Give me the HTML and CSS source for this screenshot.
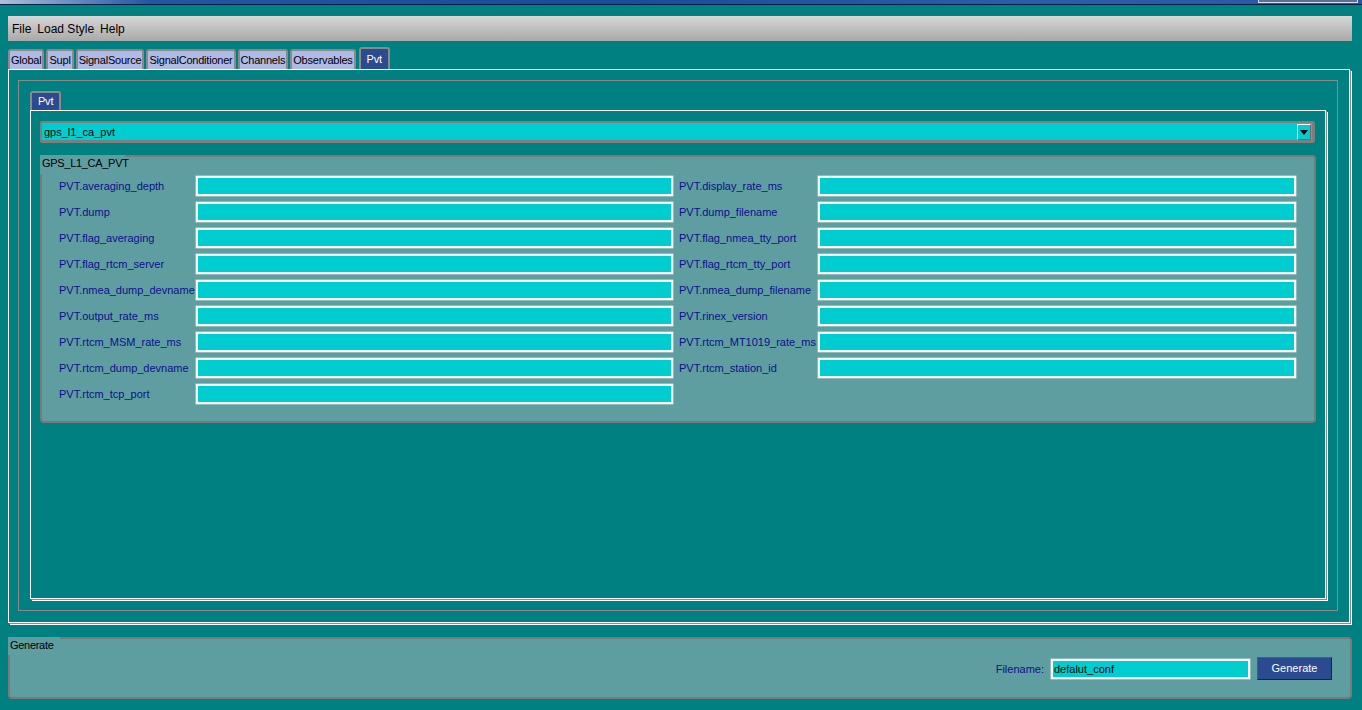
FILE: index.html
```html
<!DOCTYPE html>
<html>
<head>
<meta charset="utf-8">
<title>Config</title>
<link rel="stylesheet" href="styles.css">
</head>
<body>
<div class="titlebar"><div class="tb-btn"></div></div>
<div class="app">
  <div class="menubar">
    <span class="menu-item">File</span>
    <span class="menu-item">Load Style</span>
    <span class="menu-item">Help</span>
  </div>
  <div class="tabs">
    <div class="tab">Global</div>
    <div class="tab">Supl</div>
    <div class="tab">SignalSource</div>
    <div class="tab">SignalConditioner</div>
    <div class="tab">Channels</div>
    <div class="tab">Observables</div>
    <div class="tab active">Pvt</div>
  </div>
  <div class="outer-panel">
    <div class="frame">
      <div class="subtabs"><div class="tab active">Pvt</div></div>
      <div class="inner-panel">
        <div class="combo">
          <span class="combo-text">gps_l1_ca_pvt</span>
          <div class="combo-btn">
            <svg width="8" height="5" viewBox="0 0 8 5"><path d="M0 0H8L4 5Z" fill="#000"/></svg>
          </div>
        </div>
        <div class="group">
          <div class="group-title">GPS_L1_CA_PVT</div>
          <div class="fields">
            <label class="lbl">PVT.averaging_depth</label><div class="field"></div>
            <label class="lbl lbl-r">PVT.display_rate_ms</label><div class="field"></div>
            <label class="lbl">PVT.dump</label><div class="field"></div>
            <label class="lbl lbl-r">PVT.dump_filename</label><div class="field"></div>
            <label class="lbl">PVT.flag_averaging</label><div class="field"></div>
            <label class="lbl lbl-r">PVT.flag_nmea_tty_port</label><div class="field"></div>
            <label class="lbl">PVT.flag_rtcm_server</label><div class="field"></div>
            <label class="lbl lbl-r">PVT.flag_rtcm_tty_port</label><div class="field"></div>
            <label class="lbl">PVT.nmea_dump_devname</label><div class="field"></div>
            <label class="lbl lbl-r">PVT.nmea_dump_filename</label><div class="field"></div>
            <label class="lbl">PVT.output_rate_ms</label><div class="field"></div>
            <label class="lbl lbl-r">PVT.rinex_version</label><div class="field"></div>
            <label class="lbl">PVT.rtcm_MSM_rate_ms</label><div class="field"></div>
            <label class="lbl lbl-r">PVT.rtcm_MT1019_rate_ms</label><div class="field"></div>
            <label class="lbl">PVT.rtcm_dump_devname</label><div class="field"></div>
            <label class="lbl lbl-r">PVT.rtcm_station_id</label><div class="field"></div>
            <label class="lbl">PVT.rtcm_tcp_port</label><div class="field"></div>
          </div>
        </div>
      </div>
    </div>
  </div>
  <div class="gen-group">
    <div class="group-title gen-title">Generate</div>
    <div class="gen-row">
      <span class="lbl">Filename:</span>
      <div class="field gen-field">defalut_conf</div>
      <div class="btn">Generate</div>
    </div>
  </div>
</div>
</body>
</html>
```
FILE: styles.css
```css
html, body {
  margin: 0;
  padding: 0;
  height: 710px;
  overflow: hidden;
  background: #008080;
  font-family: "Liberation Sans", Arial, sans-serif;
  font-size: 11px;
  color: #000;
}

.titlebar {
  height: 4px;
  border-bottom: 1px solid #0c2245;
  background: linear-gradient(90deg, #aebfd8 0, #6f8fc4 5%, #2454a2 11%, #1b4b9b 45%, #2d5ca8 75%, #2a58a4 100%);
  position: relative;
}

.tb-btn {
  position: absolute;
  right: 4px;
  top: 0;
  width: 98px;
  height: 2px;
  border: 1px solid #d6dfee;
  border-top: none;
  background: #5a6f96;
}

.app {
  height: 705px;
  box-sizing: border-box;
  padding: 11px 10px 11px 8px;
  display: flex;
  flex-direction: column;
}

.menubar {
  height: 25px;
  flex: none;
  background: linear-gradient(#d7d7d7, #a9a9a9);
  display: flex;
  align-items: center;
  gap: 6px;
  padding-left: 4px;
  font-size: 12px;
  color: #000;
}

.tabs {
  margin-top: 6px;
  height: 22px;
  flex: none;
  display: flex;
  align-items: flex-end;
  gap: 2px;
}

.tab {
  height: 20px;
  box-sizing: border-box;
  border: 2px solid #8a8a8a;
  border-bottom: none;
  border-radius: 3px 3px 0 0;
  background: #b1b9e6;
  padding: 0 1px;
  line-height: 18px;
  letter-spacing: -0.22px;
  color: #000;
  white-space: nowrap;
}

.tab.active {
  height: 22px;
  line-height: 20px;
  background: #2b4a8f;
  color: #fff;
  padding: 0 6px;
  margin-left: 1px;
}

.outer-panel {
  flex: 1;
  min-height: 0;
  margin-right: 2px;
  margin-bottom: 14px;
  border: 1px solid #fff;
  box-shadow: 1px 1px 0 #8a8a8a, 2px 2px 0 #fff;
  padding: 10px 11px 11px 9px;
  display: flex;
  flex-direction: column;
}

.frame {
  flex: 1;
  border: 1px solid #8a8a8a;
  padding: 10px 11px 11px 11px;
  display: flex;
  flex-direction: column;
}

.subtabs {
  height: 19px;
  flex: none;
  display: flex;
  align-items: flex-end;
}

.subtabs .tab.active {
  height: 19px;
  line-height: 17px;
  margin-left: 0;
  padding: 0 6px;
}

.inner-panel {
  flex: 1;
  border: 1px solid #fff;
  box-shadow: 1px 1px 0 #8a8a8a, 2px 2px 0 #fff;
  padding: 10px 10px 0 9px;
}

.combo {
  height: 22px;
  box-sizing: border-box;
  border: 2px solid #7e7e7e;
  border-right-width: 3px;
  border-bottom-width: 3px;
  border-radius: 2px;
  background: #00cdd0;
  display: flex;
  align-items: center;
  justify-content: space-between;
  padding: 0 1px 0 2px;
}

.combo-text {
  line-height: 16px;
}

.combo-btn {
  width: 14px;
  height: 16px;
  box-sizing: border-box;
  border-left: 1px solid #fff;
  border-top: 1px solid #fff;
  border-right: 1px solid #6c6c6c;
  border-bottom: 1px solid #6c6c6c;
  display: flex;
  align-items: center;
  justify-content: center;
  margin-top: 1px;
}

.group {
  position: relative;
  margin-top: 12px;
  margin-right: -1px;
  border: 2px solid #7a7a7a;
  border-radius: 4px;
  background: #5f9ea0;
  padding: 19px 18px 17px 17px;
}

.group-title {
  position: absolute;
  left: -2px;
  top: -2px;
  width: 85px;
  height: 19px;
  box-sizing: border-box;
  padding: 2px 0 0 2px;
  background: #5f9ea0;
  color: #000;
  line-height: 13px;
  letter-spacing: -0.3px;
}

.fields {
  display: grid;
  grid-template-columns: 137px 477px 145px 478px;
  grid-auto-rows: 20px;
  row-gap: 6px;
  align-items: center;
}

.lbl {
  color: #0e0e8e;
  white-space: nowrap;
}

.lbl-r {
  padding-left: 6px;
}

.field {
  height: 20px;
  box-sizing: border-box;
  border: 2px solid #f6f6f6;
  background: #00cdd0;
  box-shadow: 0 0 0 0.5px #c8d8d8;
}

.gen-group {
  position: relative;
  flex: none;
  height: 62px;
  box-sizing: border-box;
  border: 2px solid #7a7a7a;
  border-radius: 4px;
  background: #5f9ea0;
  padding: 18px 18px 0 0;
}

.gen-title {
  width: 52px;
  height: 18px;
}

.gen-row {
  display: flex;
  justify-content: flex-end;
  align-items: center;
  height: 23px;
}

.gen-field {
  width: 199px;
  margin-left: 7px;
  margin-right: 7px;
  line-height: 16px;
  padding-left: 1px;
  color: #000;
}

.btn {
  width: 75px;
  height: 23px;
  box-sizing: border-box;
  background: #2b4a8f;
  border: 1px solid #3d5ca0;
  border-right-color: #14264f;
  border-bottom-color: #14264f;
  color: #fff;
  text-align: center;
  line-height: 21px;
}
```
